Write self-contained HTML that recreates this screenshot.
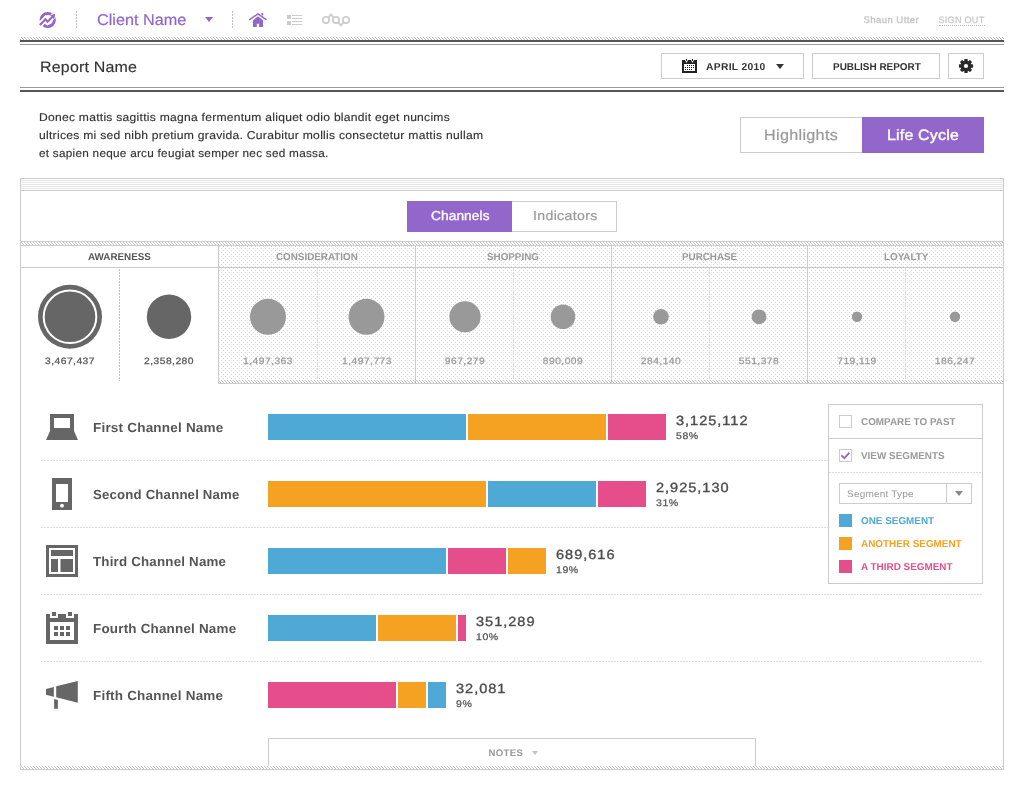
<!DOCTYPE html>
<html>
<head>
<meta charset="utf-8">
<title>Report</title>
<style>
*{margin:0;padding:0;box-sizing:border-box;}
html,body{width:1024px;height:790px;background:#fff;overflow:hidden;}
body{font-family:"Liberation Sans",sans-serif;color:#333;position:relative;-webkit-font-smoothing:antialiased;text-rendering:geometricPrecision;}
#w{position:absolute;left:0;top:0;width:1024px;height:790px;will-change:transform;}
.abs{position:absolute;}
.t{position:absolute;white-space:nowrap;line-height:1;transform-origin:0 0;}
.hatch{background-image:repeating-linear-gradient(45deg,#cfcfcf 0,#cfcfcf 1px,#fff 1px,#fff 3px);}
.hatchd{background-image:repeating-linear-gradient(45deg,#bdbdbd 0,#bdbdbd 1px,#fff 1px,#fff 3px);}
.dots{background-color:#fff;background-image:radial-gradient(circle at .5px .5px,#d6d6d6 .6px,transparent .7px),radial-gradient(circle at 2.5px 2.5px,#d6d6d6 .6px,transparent .7px);background-size:4px 4px;}
.vdot{position:absolute;width:1px;background-image:repeating-linear-gradient(180deg,#c2c2c2 0,#c2c2c2 2px,transparent 2px,transparent 3px);}
.hdot{position:absolute;height:1px;background-image:repeating-linear-gradient(90deg,#dcdcdc 0,#dcdcdc 2px,transparent 2px,transparent 3px);}
.btn{position:absolute;border:1px solid #ccc;background:#fff;}
.cap{font-weight:bold;font-size:10px;letter-spacing:.3px;color:#333;transform-origin:0 0;transform:scaleX(1.03);}
.st{top:252.6px;font-size:10px;font-weight:bold;letter-spacing:0;color:#999;transform:scaleX(.983);}
.nm{top:357px;width:100px;text-align:center;font-size:9.2px;letter-spacing:.4px;color:#999;-webkit-text-stroke:.25px currentColor;transform-origin:50% 0;transform:scaleX(1.12);}
.ch{left:92.5px;font-size:13.2px;font-weight:bold;letter-spacing:.2px;color:#555;transform:scaleX(1.01);}
.bar{position:absolute;height:26px;}
.b{background:#4fa9d6;}.o{background:#f5a122;}.p{background:#e54e8b;}
.val{font-size:13.3px;letter-spacing:.9px;color:#4d4d4d;-webkit-text-stroke:.35px #4d4d4d;transform:scaleX(1.094);}
.pct{font-size:9.6px;letter-spacing:.5px;color:#555;-webkit-text-stroke:.25px #555;transform:scaleX(1.1);}
.ds{left:39px;font-size:11.3px;letter-spacing:.25px;color:#333;-webkit-text-stroke:.15px #333;transform:scaleX(1.08);}
.lg{left:861px;font-size:10px;font-weight:bold;letter-spacing:0;color:#999;transform:scaleX(.99);}
</style>
</head>
<body>
<div id="w">

<!-- ===== top nav ===== -->
<div id="nav">
  <div class="vdot" style="left:76px;top:11px;height:17px;"></div>
  <div class="t" id="client" style="left:96.5px;top:13px;font-size:15.6px;color:#9366cc;letter-spacing:0;transform:scaleX(1.04);-webkit-text-stroke:.2px #9366cc;">Client Name</div>
  <div class="abs" style="left:205px;top:17px;width:0;height:0;border-left:4px solid transparent;border-right:4px solid transparent;border-top:5px solid #9366cc;"></div>
  <div class="vdot" style="left:232px;top:11px;height:17px;"></div>
  <div class="t" id="user" style="left:863.5px;top:15.5px;font-size:9.6px;color:#c4c4c4;letter-spacing:.4px;-webkit-text-stroke:.3px #c4c4c4;">Shaun Utter</div>
  <div class="t" id="signout" style="left:938.5px;top:16px;font-size:9.2px;color:#c4c4c4;letter-spacing:.2px;padding-bottom:0;-webkit-text-stroke:.2px #c4c4c4;border-bottom:1px dotted #bbb;">SIGN OUT</div>
</div>

<!-- header rules -->
<div class="abs" style="left:20px;top:40px;width:984px;height:2px;background:#555;"></div>
<div class="abs" style="left:20px;top:44px;width:984px;height:1px;background:#999;"></div>
<div class="abs" style="left:20px;top:87px;width:984px;height:1px;background:#999;"></div>
<div class="abs" style="left:20px;top:90px;width:984px;height:2px;background:#555;"></div>

<!-- ===== report bar ===== -->
<div class="t" id="rname" style="left:39.5px;top:59.5px;font-size:15px;color:#333;letter-spacing:.18px;transform:scaleX(1.065);-webkit-text-stroke:.15px #333;">Report Name</div>
<div class="btn" style="left:661px;top:53px;width:143px;height:26px;"></div>
<div class="t cap" id="april" style="left:706px;top:63px;transform:scaleX(1.03);">APRIL 2010</div>
<div class="abs" style="left:776px;top:64px;width:0;height:0;border-left:4px solid transparent;border-right:4px solid transparent;border-top:5px solid #333;"></div>
<div class="btn" style="left:812px;top:53px;width:128px;height:26px;"></div>
<div class="t cap" id="publish" style="left:832.5px;top:63px;letter-spacing:0;transform:scaleX(.994);">PUBLISH REPORT</div>
<div class="btn" style="left:948px;top:53px;width:36px;height:26px;"></div>

<!-- ===== description ===== -->
<div class="t ds" id="d1" style="top:112.7px;transform:scaleX(1.069);">Donec mattis sagittis magna fermentum aliquet odio blandit eget nuncims</div>
<div class="t ds" id="d2" style="top:130.7px;transform:scaleX(1.074);">ultrices mi sed nibh pretium gravida. Curabitur mollis consectetur mattis nullam</div>
<div class="t ds" id="d3" style="top:148.7px;transform:scaleX(1.041);">et sapien neque arcu feugiat semper nec sed massa.</div>

<!-- Highlights / Life Cycle -->
<div class="btn" style="left:740px;top:117px;width:123px;height:36px;"></div>
<div class="abs" style="left:862px;top:117px;width:122px;height:36px;background:#9366cc;"></div>
<div class="t" id="hl" style="left:763.5px;top:127.6px;font-size:15px;color:#999;letter-spacing:.3px;transform:scaleX(1.076);-webkit-text-stroke:.2px #999;">Highlights</div>
<div class="t" id="lc" style="left:887px;top:127.6px;font-size:15px;color:#fff;letter-spacing:.2px;-webkit-text-stroke:.4px #fff;transform:scaleX(1.06);">Life Cycle</div>

<!-- ===== main panel ===== -->
<div class="abs" id="panel" style="left:20px;top:178px;width:984px;height:592px;border:1px solid #ccc;"></div>
<div class="abs" style="left:21px;top:179px;width:982px;height:11px;background-image:repeating-linear-gradient(180deg,#fff 0,#fff 1px,#e6e6e6 1px,#e6e6e6 2px);"></div>
<div class="abs" style="left:21px;top:190px;width:982px;height:1px;background:#ccc;"></div>

<!-- Channels / Indicators -->
<div class="abs" style="left:407px;top:201px;width:105px;height:31px;background:#9366cc;"></div>
<div class="btn" style="left:512px;top:201px;width:105px;height:31px;border-left:none;"></div>
<div class="t" id="chan" style="left:430.5px;top:209.4px;font-size:13px;color:#fff;letter-spacing:.1px;-webkit-text-stroke:.35px #fff;transform:scaleX(1.052);">Channels</div>
<div class="t" id="indi" style="left:532.5px;top:209.4px;font-size:13px;color:#999;letter-spacing:.3px;transform:scaleX(1.088);-webkit-text-stroke:.2px #999;">Indicators</div>

<!-- lifecycle strip -->
<div class="abs" style="left:21px;top:241px;width:982px;height:1px;background:#ccc;"></div>
<div class="abs" style="left:21px;top:245px;width:982px;height:1px;background:#ccc;"></div>
<div class="abs dots" style="left:219px;top:246px;width:784px;height:134px;"></div>
<div class="abs" style="left:218px;top:383px;width:785px;height:1px;background:#ccc;"></div>
<div class="abs" style="left:21px;top:267px;width:982px;height:1px;background:#ccc;"></div>
<div class="abs" style="left:218px;top:246px;width:1px;height:138px;background:#ccc;"></div>
<div class="abs" style="left:415px;top:246px;width:1px;height:137px;background:#ccc;"></div>
<div class="abs" style="left:611px;top:246px;width:1px;height:137px;background:#ccc;"></div>
<div class="abs" style="left:807px;top:246px;width:1px;height:137px;background:#ccc;"></div>
<div class="vdot" style="left:119px;top:269px;height:112px;"></div>
<div class="vdot" style="left:317px;top:269px;height:110px;opacity:.6;"></div>
<div class="vdot" style="left:513px;top:269px;height:110px;opacity:.6;"></div>
<div class="vdot" style="left:709px;top:269px;height:110px;opacity:.6;"></div>
<div class="vdot" style="left:905px;top:269px;height:110px;opacity:.6;"></div>

<div class="t st" id="s1" style="left:88px;color:#555;">AWARENESS</div>
<div class="t st" id="s2" style="left:276px;">CONSIDERATION</div>
<div class="t st" id="s3" style="left:487px;">SHOPPING</div>
<div class="t st" id="s4" style="left:682px;">PURCHASE</div>
<div class="t st" id="s5" style="left:884px;">LOYALTY</div>

<svg class="abs" style="left:21px;top:268px;" width="982" height="112" viewBox="21 268 982 112">
  <circle cx="70" cy="316.8" r="32" fill="#666"/>
  <circle cx="70" cy="316.8" r="26.3" fill="none" stroke="#fff" stroke-width="2"/>
  <circle cx="169" cy="316.8" r="22.2" fill="#666"/>
  <circle cx="268" cy="316.8" r="18" fill="#999"/>
  <circle cx="366.5" cy="316.8" r="18" fill="#999"/>
  <circle cx="465" cy="316.8" r="15.6" fill="#999"/>
  <circle cx="563" cy="316.8" r="12.3" fill="#999"/>
  <circle cx="661" cy="316.8" r="7.8" fill="#999"/>
  <circle cx="759" cy="316.8" r="7.4" fill="#999"/>
  <circle cx="857" cy="316.8" r="5.2" fill="#999"/>
  <circle cx="955" cy="316.8" r="5.2" fill="#999"/>
</svg>
<div class="t nm" id="n1" style="left:20px;color:#555;">3,467,437</div>
<div class="t nm" id="n2" style="left:119px;color:#555;">2,358,280</div>
<div class="t nm" id="n3" style="left:218px;">1,497,363</div>
<div class="t nm" id="n4" style="left:316.5px;">1,497,773</div>
<div class="t nm" id="n5" style="left:415px;">967,279</div>
<div class="t nm" id="n6" style="left:513px;">890,009</div>
<div class="t nm" id="n7" style="left:611px;">284,140</div>
<div class="t nm" id="n8" style="left:709px;">551,378</div>
<div class="t nm" id="n9" style="left:807px;">719,119</div>
<div class="t nm" id="n10" style="left:905px;">186,247</div>

<!-- ===== channel rows ===== -->
<div class="hdot" style="left:41px;top:460px;width:941px;"></div>
<div class="hdot" style="left:41px;top:527px;width:941px;"></div>
<div class="hdot" style="left:41px;top:594px;width:941px;"></div>
<div class="hdot" style="left:41px;top:661px;width:941px;"></div>

<div class="t ch" id="c1" style="top:420.5px;transform:scaleX(1.024);">First Channel Name</div>
<div class="t ch" id="c2" style="top:487.5px;transform:scaleX(0.999);">Second Channel Name</div>
<div class="t ch" id="c3" style="top:554.5px;transform:scaleX(1.01);">Third Channel Name</div>
<div class="t ch" id="c4" style="top:621.5px;transform:scaleX(1.018);">Fourth Channel Name</div>
<div class="t ch" id="c5" style="top:688.5px;transform:scaleX(1.022);">Fifth Channel Name</div>

<!-- bars -->
<div class="bar b" style="left:268px;top:414px;width:198px;"></div><div class="bar o" style="left:468px;top:414px;width:138px;"></div><div class="bar p" style="left:608px;top:414px;width:58px;"></div>
<div class="bar o" style="left:268px;top:481px;width:218px;"></div><div class="bar b" style="left:488px;top:481px;width:108px;"></div><div class="bar p" style="left:598px;top:481px;width:48px;"></div>
<div class="bar b" style="left:268px;top:548px;width:178px;"></div><div class="bar p" style="left:448px;top:548px;width:58px;"></div><div class="bar o" style="left:508px;top:548px;width:38px;"></div>
<div class="bar b" style="left:268px;top:615px;width:108px;"></div><div class="bar o" style="left:378px;top:615px;width:78px;"></div><div class="bar p" style="left:458px;top:615px;width:8px;"></div>
<div class="bar p" style="left:268px;top:682px;width:128px;"></div><div class="bar o" style="left:398px;top:682px;width:28px;"></div><div class="bar b" style="left:428px;top:682px;width:18px;"></div>

<div class="t val" id="v1" style="margin-top:-.4px;left:676px;top:414px;">3,125,112</div><div class="t pct" id="p1" style="left:676px;top:432px;">58%</div>
<div class="t val" id="v2" style="margin-top:-.4px;left:656px;top:481px;">2,925,130</div><div class="t pct" id="p2" style="left:656px;top:499px;">31%</div>
<div class="t val" id="v3" style="margin-top:-.4px;left:556px;top:548px;">689,616</div><div class="t pct" id="p3" style="left:556px;top:566px;">19%</div>
<div class="t val" id="v4" style="margin-top:-.4px;left:476px;top:615px;">351,289</div><div class="t pct" id="p4" style="left:476px;top:633px;">10%</div>
<div class="t val" id="v5" style="margin-top:-.4px;left:456px;top:682px;">32,081</div><div class="t pct" id="p5" style="left:456px;top:700px;">9%</div>

<!-- notes -->
<div class="abs" style="left:268px;top:738px;width:488px;height:28px;border:1px solid #ccc;border-bottom:none;background:#fff;"></div>
<div class="t" id="notes" style="left:488.5px;top:749px;font-size:9.6px;font-weight:bold;letter-spacing:.35px;color:#999;">NOTES</div>
<div class="abs" style="left:531.5px;top:750.5px;width:0;height:0;border-left:3.75px solid transparent;border-right:3.75px solid transparent;border-top:4.5px solid #c2c2c2;"></div>

<!-- panel bottom hatch -->

<!-- ===== legend panel ===== -->
<div class="btn" style="left:828px;top:404px;width:155px;height:180px;"></div>
<div class="abs" style="left:829px;top:438px;width:153px;height:1px;background:#ccc;"></div>
<div class="hdot" style="left:829px;top:472px;width:153px;"></div>
<div class="btn" style="left:839px;top:415px;width:13px;height:13px;"></div>
<div class="btn" style="left:839px;top:449px;width:13px;height:13px;"></div>
<svg class="abs" style="left:839px;top:449px;" width="13" height="13" viewBox="839 449 13 13"><polyline points="841.3,455.3 844.4,458.2 849.4,452.6" fill="none" stroke="#9366cc" stroke-width="1.8"/></svg>
<div class="t lg" id="l1" style="top:417.7px;">COMPARE TO PAST</div>
<div class="t lg" id="l2" style="top:451.7px;">VIEW SEGMENTS</div>
<div class="btn" style="left:839px;top:483px;width:133px;height:21px;"></div>
<div class="abs" style="left:946px;top:484px;width:1px;height:19px;background:#ccc;"></div>
<div class="t" id="seg" style="left:846.7px;top:490px;font-size:9.5px;color:#999;letter-spacing:.15px;transform:scaleX(1.06);">Segment Type</div>
<div class="abs" style="left:955px;top:491px;width:0;height:0;border-left:4px solid transparent;border-right:4px solid transparent;border-top:5px solid #888;"></div>
<div class="abs b" style="left:839px;top:514px;width:13px;height:13px;"></div>
<div class="abs o" style="left:839px;top:537px;width:13px;height:13px;"></div>
<div class="abs p" style="left:839px;top:560px;width:13px;height:13px;"></div>
<div class="t lg" id="l3" style="top:516.7px;color:#4fa9d6;">ONE SEGMENT</div>
<div class="t lg" id="l4" style="top:539.7px;color:#f5a122;">ANOTHER SEGMENT</div>
<div class="t lg" id="l5" style="top:562.7px;color:#e54e8b;">A THIRD SEGMENT</div>

<!-- ===== icons ===== -->
<svg class="abs" style="left:0;top:0;" width="1024" height="790" viewBox="0 0 1024 790">
  <!-- logo -->
  <defs>
    <clipPath id="lg"><circle cx="47.75" cy="20" r="8.2"/></clipPath>
    <pattern id="h2" width="3" height="3" patternUnits="userSpaceOnUse"><rect x="2" y="0" width="1" height="1"/><rect x="0" y="1" width="1" height="1"/><rect x="1" y="2" width="1" height="1"/></pattern>
    <pattern id="h1" width="3" height="3" patternUnits="userSpaceOnUse"><rect x="1" y="0" width="1" height="1"/><rect x="2" y="1" width="1" height="1"/><rect x="0" y="2" width="1" height="1"/></pattern>
    <pattern id="h0" width="3" height="3" patternUnits="userSpaceOnUse"><rect x="0" y="0" width="1" height="1"/><rect x="1" y="1" width="1" height="1"/><rect x="2" y="2" width="1" height="1"/></pattern>
  </defs>
  <g shape-rendering="crispEdges">
    <rect x="20" y="37" width="984" height="3" fill="url(#h2)" opacity=".27"/>
    <rect x="21" y="242" width="982" height="3" fill="url(#h1)" opacity=".22"/>
    <rect x="219" y="380" width="784" height="3" fill="url(#h0)" opacity=".22"/>
    <rect x="21" y="766" width="982" height="3" fill="url(#h2)" opacity=".22"/>
  </g>
  <g>
    <circle cx="47.75" cy="20" r="6.6" fill="none" stroke="#9366cc" stroke-width="3"/>
    <polyline clip-path="url(#lg)" points="35,29.7 45.5,19.2 47.6,21.7 59,10.3" fill="none" stroke="#fff" stroke-width="5.6" stroke-linejoin="miter"/>
    <polyline points="39.8,24.9 45.5,19.2 47.6,21.7 53,16.3" fill="none" stroke="#9366cc" stroke-width="2.1" stroke-linejoin="miter" stroke-linecap="butt"/>
    <polygon points="55.4,13.9 50,15.2 54.1,19.3" fill="#9366cc"/>
  </g>
  <!-- home -->
  <g fill="#9366cc">
    <polygon points="257.9,16.3 263,20.3 263,27 259.1,27 259.1,23.8 256.8,23.8 256.8,27 253,27 253,20.3"/>
    <polyline points="249.3,19.9 257.9,13.9 266.6,19.9" fill="none" stroke="#9366cc" stroke-width="1.4"/>
    <polygon points="261.3,13 263.2,13 263.2,15.9 261.3,14.6"/>
  </g>
  <!-- list -->
  <g fill="#ccc">
    <rect x="287" y="15" width="4" height="4"/><rect x="287" y="21" width="4" height="4"/>
    <rect x="292" y="15" width="10" height="1"/><rect x="292" y="18" width="10" height="1"/>
    <rect x="292" y="21" width="10" height="1"/><rect x="292" y="24" width="10" height="1"/>
  </g>
  <!-- connections -->
  <g fill="none" stroke="#ccc" stroke-width="1.7">
    <circle cx="326" cy="19.9" r="3.15"/><circle cx="336" cy="19.9" r="3.15"/><circle cx="346" cy="19.9" r="3.15"/>
    <polyline points="328.5,17.5 330.9,14.5 333.5,17.5" stroke-width="1.8"/>
    <polyline points="338.3,22.3 340.9,25.3 343.6,22.3" stroke-width="1.8"/>
  </g>
  <!-- small calendar -->
  <g fill="#222">
    <path d="M682 60h3l1.5 3 1.5-3h3l1.5 3 1.5-3h3v13h-15z"/>
    <rect x="686" y="59" width="1" height="2"/><rect x="692" y="59" width="1" height="2"/>
    <rect x="684" y="64" width="11" height="7" fill="#fff"/>
    <g>
      <rect x="687" y="65" width="1" height="1"/><rect x="689" y="65" width="1" height="1"/><rect x="691" y="65" width="1" height="1"/><rect x="693" y="65" width="1" height="1"/>
      <rect x="685" y="67" width="1" height="1"/><rect x="687" y="67" width="1" height="1"/><rect x="689" y="67" width="1" height="1"/><rect x="691" y="67" width="1" height="1"/><rect x="693" y="67" width="1" height="1"/>
      <rect x="685" y="69" width="1" height="1"/><rect x="687" y="69" width="1" height="1"/><rect x="689" y="69" width="1" height="1"/><rect x="691" y="69" width="1" height="1"/>
    </g>
  </g>
  <!-- gear -->
  <g transform="translate(966 66)" fill="#2a2a2a">
    <circle r="5.5"/>
    <rect x="-1.65" y="-7.1" width="3.3" height="14.2" rx=".6"/><rect x="-1.65" y="-7.1" width="3.3" height="14.2" rx=".6" transform="rotate(45)"/><rect x="-1.65" y="-7.1" width="3.3" height="14.2" rx=".6" transform="rotate(90)"/><rect x="-1.65" y="-7.1" width="3.3" height="14.2" rx=".6" transform="rotate(135)"/>
    <circle r="2.1" fill="#fff"/>
  </g>
  <!-- laptop -->
  <g fill="#666">
    <path d="M50 414h24v17l4 9h-32l4-9z M54 418v10h16v-10z" fill-rule="evenodd"/>
  </g>
  <!-- phone -->
  <g fill="#666">
    <path d="M52 478h20v32h-20z M56 484v18h12v-18z" fill-rule="evenodd"/>
    <circle cx="62" cy="505.7" r="1.9" fill="#fff"/>
  </g>
  <!-- layout -->
  <g fill="#666">
    <path d="M46 545h32v32h-32z M49 548v26h26v-26z" fill-rule="evenodd"/>
    <rect x="51" y="550" width="22" height="6"/><rect x="51" y="559" width="7" height="13"/><rect x="60.5" y="559" width="12.5" height="13"/>
  </g>
  <!-- calendar -->
  <g fill="#666" transform="translate(46 612)">
    <rect x="6" y="0" width="4" height="4"/><rect x="22" y="0" width="4" height="4"/>
    <path d="M0 2h4v4h8v-4h8v4h8v-4h4v30h-32z M4 10v18h24v-18z" fill-rule="evenodd"/>
    <rect x="8" y="14" width="4" height="4"/><rect x="14" y="14" width="4" height="4"/><rect x="20" y="14" width="4" height="4"/>
    <rect x="8" y="20" width="4" height="4"/><rect x="14" y="20" width="4" height="4"/><rect x="20" y="20" width="4" height="4"/>
  </g>
  <!-- megaphone -->
  <g fill="#666">
    <polygon points="46,689.1 53.85,686.9 53.85,696.8 46,694.8"/>
    <polygon points="56.2,686.2 77.8,680.9 77.8,702.75 56.2,697.3"/>
    <polygon points="54.1,699 57.9,700.1 57.9,708.7 54.1,708.7"/>
  </g>
</svg>

</div>
</body>
</html>
